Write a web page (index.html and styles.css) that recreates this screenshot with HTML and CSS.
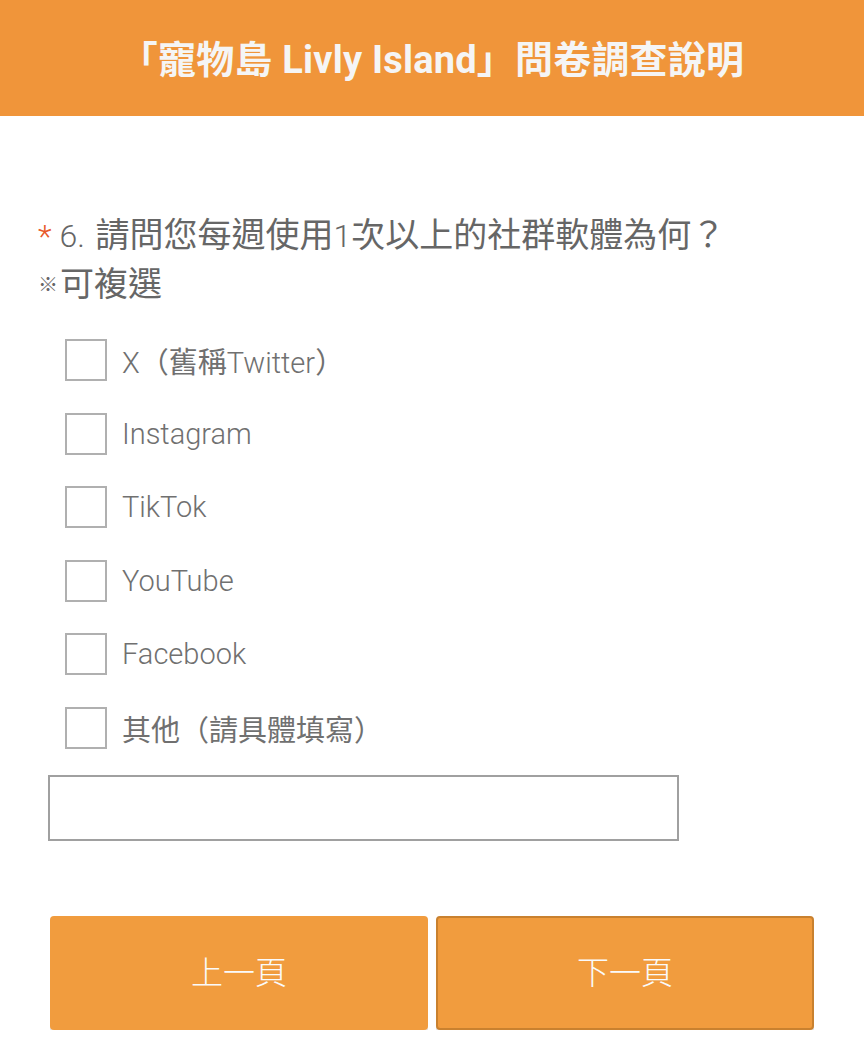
FILE: index.html
```html
<!DOCTYPE html>
<html lang="zh-Hant">
<head>
    <meta charset="UTF-8">
    <title>問卷調查說明</title>
    <link rel="stylesheet" href="styles.css">
</head>

<body>
    <div id="header">
        <h1>「寵物島 Livly Island」問卷調查說明</h1>
    </div>

    <div id="question">
        <p class="title"><span class="req">*</span><span class="lt num"> 6. </span>請問您每週使用<span class="lt">1</span>次以上的社群軟體為何？<br><span class="mark">※</span>可複選</p>

        <ul id="options">
            <li><span class="box"></span><span class="label"><span class="lt">X</span>（舊稱<span class="lt">Twitter</span>）</span></li>
            <li><span class="box"></span><span class="label lt">Instagram</span></li>
            <li><span class="box"></span><span class="label lt">TikTok</span></li>
            <li><span class="box"></span><span class="label lt">YouTube</span></li>
            <li><span class="box"></span><span class="label lt">Facebook</span></li>
            <li><span class="box"></span><span class="label">其他（請具體填寫）</span></li>
        </ul>

        <div class="other"></div>
    </div>

    <div id="btns">
        <div class="btn">上一頁</div>
        <div class="btn next">下一頁</div>
    </div>
</body>

</html>
```

FILE: styles.css
```css
body {
    margin: 0;
    background: #fff;
    font-family: "Roboto", "Noto Sans CJK TC", sans-serif;
}

ul,
li {
    list-style: none;
    margin: 0;
    padding: 0;
}

#header {
    height: 116px;
    background: #f0953a;
    display: flex;
    align-items: center;
    justify-content: center;
}

#header h1 {
    margin: 0 0 4px;
    font-size: 38px;
    font-weight: bold;
    color: #f5f5f5;
    letter-spacing: 0.2px;
}

#question {
    padding: 95px 0 0 38px;
}

.title {
    margin: 0;
    font-size: 34px;
    line-height: 48px;
    font-weight: 400;
    color: #666;
}

.lt {
    font-weight: 300;
}

.title .lt {
    font-size: 32px;
}

.title .num {
    margin-right: 3px;
}

.mark {
    font-size: 20px;
    vertical-align: 4px;
    margin-right: 2px;
}

.req {
    color: #e8582a;
    font-weight: 300;
    font-size: 32px;
}

#options {
    padding: 30px 0 0 27px;
    display: flex;
    flex-direction: column;
    gap: 31.5px;
}

#options li {
    display: flex;
    align-items: center;
    height: 42px;
}

.box {
    width: 38px;
    height: 38px;
    border: 2px solid #b0b0b0;
    background: #fff;
    flex-shrink: 0;
}

.label {
    margin-left: 15px;
    font-size: 29px;
    color: #707070;
}

.other {
    margin: 26px 0 0 10px;
    width: 627px;
    height: 62px;
    border: 2px solid #a0a0a0;
}

#btns {
    display: flex;
    gap: 8px;
    padding: 75px 0 0 50px;
}

.btn {
    width: 378px;
    height: 114px;
    box-sizing: border-box;
    background: #f19c3e;
    border-radius: 4px;
    box-shadow: 0 6px 0 #e6e6e6;
    display: flex;
    align-items: center;
    justify-content: center;
    padding-bottom: 6px;
    font-size: 32px;
    font-weight: 300;
    color: #fafafa;
}

.next {
    border: 2px solid #c9812f;
}
```
